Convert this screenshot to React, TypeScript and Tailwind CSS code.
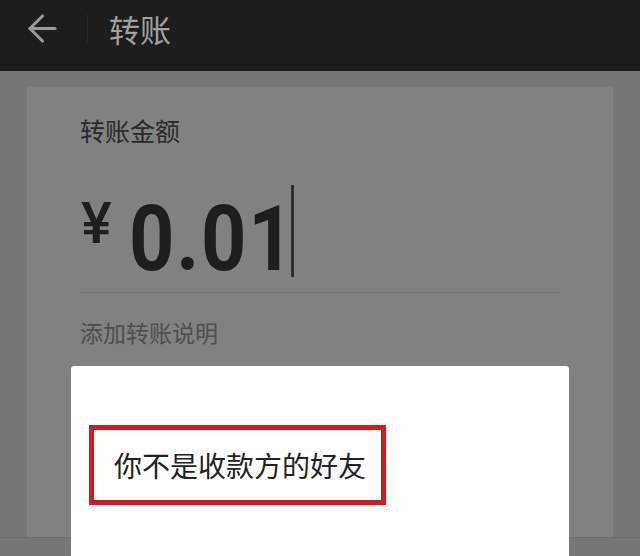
import { ArrowLeft } from "lucide-react";

const cjk = { fontFamily: '"Noto Sans CJK SC", "Noto Sans", sans-serif' };
const digits = { fontFamily: "Roboto, sans-serif" };

function TopBar() {
  return (
    <div className="flex h-[71px] items-center bg-[#1d1d1d] pb-[14px]">
      <ArrowLeft className="ml-[21px] h-[43px] w-[43px] text-[#9a9a9a]" strokeWidth={1.7} />
      <div className="ml-[23px] h-[30px] w-px bg-[#262626]" />
      <span className="ml-[21px] text-[31px] leading-none text-[#a0a0a0]" style={cjk}>
        转账
      </span>
    </div>
  );
}

function AmountCard() {
  return (
    <div className="h-[450px] bg-[#818181] pl-[53px] pr-[53px] pt-[27px]">
      <div className="text-[25px] leading-[32px] text-[#2a2a2a]" style={cjk}>
        转账金额
      </div>

      {/* amount input: currency sign, value and caret */}
      <div className="mt-[39px] flex h-[92px] items-start">
        <span className="ml-px mt-[9px] text-[58px] font-medium leading-none text-[#1e1e1e]" style={digits}>
          ¥
        </span>
        <span
          className="ml-[17px] mt-[10px] w-[157px] origin-left scale-x-[0.88] text-[90px] font-bold leading-none tracking-[2px] text-[#1e1e1e]"
          style={digits}
        >
          0.01
        </span>
        <span className="ml-[5px] h-[92px] w-[3px] bg-[#2e2e2e]" />
      </div>

      <div className="mt-[15px] h-px bg-[#737373]" />

      <div className="mt-[24px] text-[23px] leading-[30px] text-[#4e4e4e]" style={cjk}>
        添加转账说明
      </div>
    </div>
  );
}

function NoticeDialog() {
  return (
    <div className="absolute left-[71px] top-[366px] h-[220px] w-[498px] rounded-[3px] bg-white pl-[18px] pt-[59px]">
      <div className="flex h-[80px] w-[297px] items-center border-[5px] border-[#d01c1c] pl-[20px]">
        <span className="text-[28px] leading-none text-[#222]" style={cjk}>
          你不是收款方的好友
        </span>
      </div>
    </div>
  );
}

export default function App() {
  return (
    <div className="relative h-[556px] w-[640px] overflow-hidden bg-[#777777]">
      <TopBar />
      <div className="px-[27px] pt-[16px]">
        <AmountCard />
      </div>
      <div className="h-px bg-[#6d6d6d]" />
      <NoticeDialog />
    </div>
  );
}
